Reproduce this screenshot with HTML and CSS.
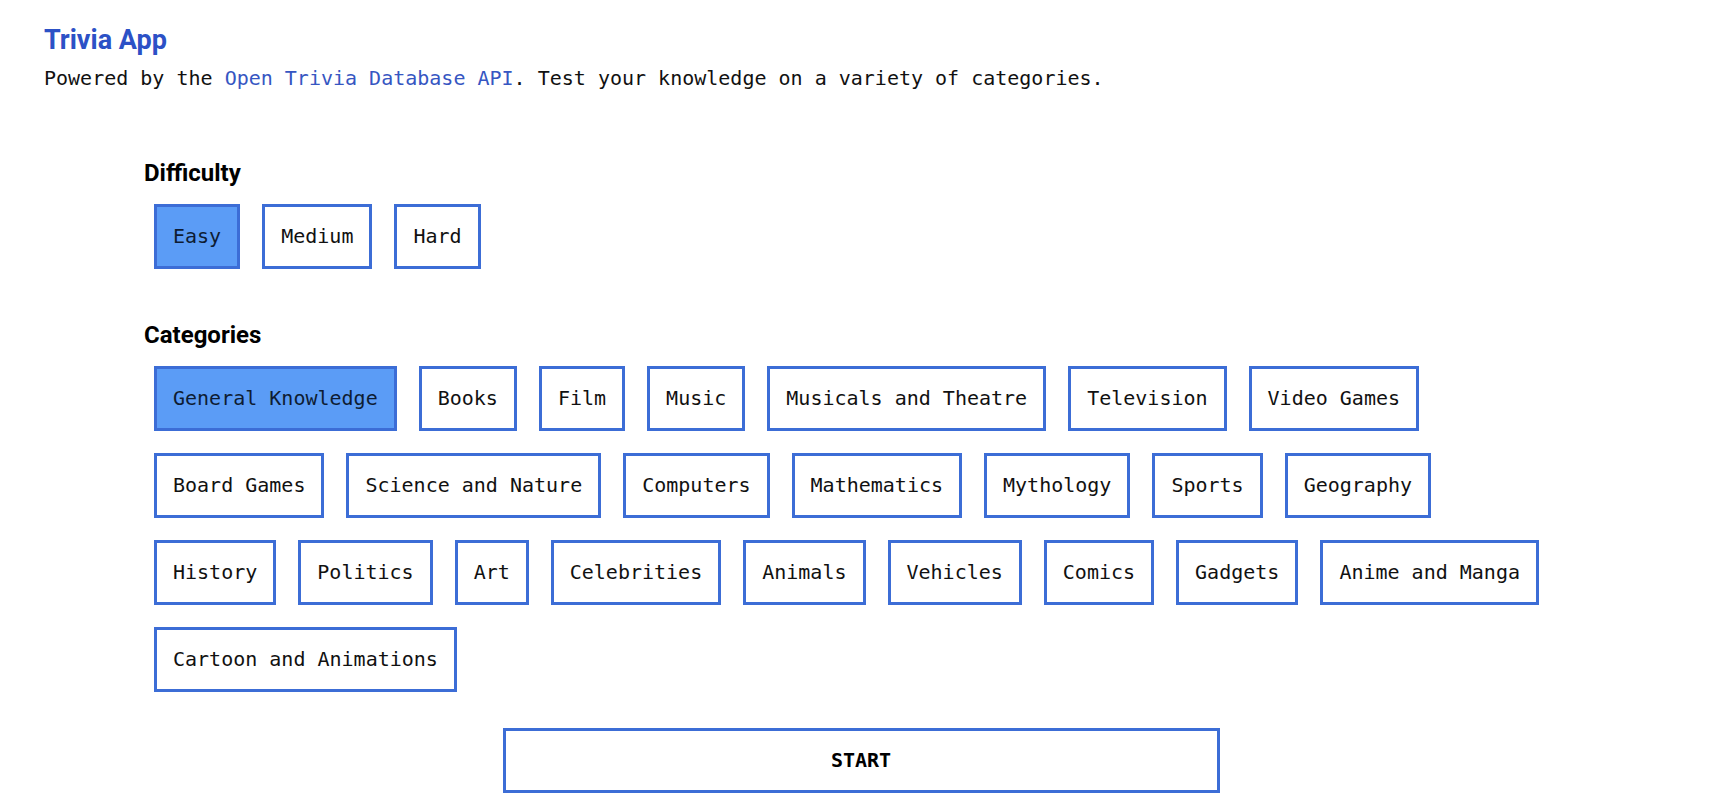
FILE: index.html
```html
<!DOCTYPE html>
<html lang="en">
<head>
<meta charset="utf-8">
<title>Trivia App</title>
<link rel="stylesheet" href="styles.css">
</head>
<body>
<header class="header">
  <h1 class="title">Trivia App</h1>
  <p class="subtitle">Powered by the <a class="link" href="#">Open Trivia Database API</a>. Test your knowledge on a variety of categories.</p>
</header>
<main class="quiz">
  <section class="group group-difficulty">
    <h2 class="label">Difficulty</h2>
    <div class="options">
      <button class="option selected">Easy</button>
      <button class="option">Medium</button>
      <button class="option">Hard</button>
    </div>
  </section>
  <section class="group group-categories">
    <h2 class="label">Categories</h2>
    <div class="options">
      <button class="option selected">General Knowledge</button>
      <button class="option">Books</button>
      <button class="option">Film</button>
      <button class="option">Music</button>
      <button class="option">Musicals and Theatre</button>
      <button class="option">Television</button>
      <button class="option">Video Games</button>
      <button class="option">Board Games</button>
      <button class="option">Science and Nature</button>
      <button class="option">Computers</button>
      <button class="option">Mathematics</button>
      <button class="option">Mythology</button>
      <button class="option">Sports</button>
      <button class="option">Geography</button>
      <button class="option">History</button>
      <button class="option">Politics</button>
      <button class="option">Art</button>
      <button class="option">Celebrities</button>
      <button class="option">Animals</button>
      <button class="option">Vehicles</button>
      <button class="option">Comics</button>
      <button class="option">Gadgets</button>
      <button class="option">Anime and Manga</button>
      <button class="option">Cartoon and Animations</button>
    </div>
  </section>
  <div class="actions">
    <button class="start">START</button>
  </div>
</main>
</body>
</html>
```
FILE: styles.css
```css
* { box-sizing: border-box; }

html, body {
  margin: 0;
  padding: 0;
  background: #ffffff;
}

body {
  font-family: "DejaVu Sans Mono", "Liberation Mono", monospace;
  font-size: 20px;
  color: #111111;
}

.header {
  padding: 25px 44px 0 44px;
}

.title {
  margin: 0;
  font-family: Roboto, "Liberation Sans", sans-serif;
  font-weight: 700;
  font-size: 27px;
  line-height: 30px;
  color: #2c51c6;
}

.subtitle {
  margin: 11px 0 0 0;
  line-height: 24px;
  white-space: nowrap;
}

.link {
  color: #3656c2;
  text-decoration: none;
}

.quiz {
  margin: 0 144px;
  padding-top: 69px;
}

.group-categories {
  margin-top: 52px;
}

.label {
  margin: 0;
  font-family: Roboto, "Liberation Sans", sans-serif;
  font-weight: 700;
  font-size: 24px;
  line-height: 29px;
  color: #000000;
}

.options {
  display: flex;
  flex-wrap: wrap;
  column-gap: 22px;
  row-gap: 22px;
  padding: 0 10px;
  margin-top: 16px;
}

.option {
  font-family: "DejaVu Sans Mono", "Liberation Mono", monospace;
  font-size: 20px;
  line-height: 27px;
  padding: 16px;
  border: 3px solid #3c6dd6;
  background: #ffffff;
  color: #111111;
  cursor: pointer;
}

.option.selected {
  background: #5b9cf6;
  color: #0e1c33;
}

.actions {
  margin-top: 36px;
  display: flex;
  justify-content: center;
}

.start {
  width: 50%;
  font-family: "DejaVu Sans Mono", "Liberation Mono", monospace;
  font-weight: 700;
  font-size: 20px;
  line-height: 27px;
  padding: 16px;
  border: 3px solid #3c6dd6;
  background: #ffffff;
  color: #000000;
  cursor: pointer;
}
```
